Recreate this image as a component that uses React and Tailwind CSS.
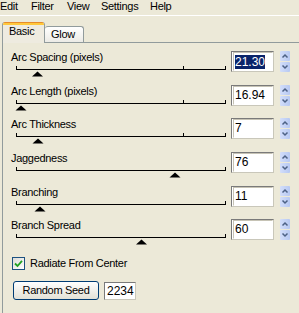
import React from 'react';

const rows = [
  { label: 'Arc Spacing (pixels)', value: '21.30', thumb: 37.5, mid: true, h: 'h-[34px]', selected: true },
  { label: 'Arc Length (pixels)', value: '16.94', thumb: 21, mid: true, h: 'h-[33px]' },
  { label: 'Arc Thickness', value: '7', thumb: 38, mid: true, h: 'h-[34px]' },
  { label: 'Jaggedness', value: '76', thumb: 175, mid: false, h: 'h-[34px]' },
  { label: 'Branching', value: '11', thumb: 40, mid: false, h: 'h-[33px]' },
  { label: 'Branch Spread', value: '60', thumb: 141.5, mid: false, h: 'h-[34px]' },
];

function Spinner() {
  return (
    <svg width="10" height="21" className="block">
      <defs>
        <linearGradient id="sp" x1="0" y1="0" x2="1" y2="0">
          <stop offset="0" stopColor="#D3DEFA" />
          <stop offset="1" stopColor="#B6C8F2" />
        </linearGradient>
      </defs>
      <rect x="0" y="0" width="10" height="10" rx="1" fill="url(#sp)" />
      <rect x="0" y="11" width="10" height="10" rx="1" fill="url(#sp)" />
      <path d="M2.5 6.5 L5 4 L7.5 6.5" fill="none" stroke="#4D6185" strokeWidth="1.5" />
      <path d="M2.5 14.5 L5 17 L7.5 14.5" fill="none" stroke="#4D6185" strokeWidth="1.5" />
    </svg>
  );
}

function Slider({ thumb, mid }) {
  const cx = thumb - 3;
  return (
    <svg width="226" height="13" className="block">
      <line x1="13" y1="5.5" x2="223" y2="5.5" stroke="#000" strokeWidth="1" />
      <line x1="13.5" y1="2" x2="13.5" y2="6" stroke="#000" strokeWidth="1" />
      <line x1="222.5" y1="2" x2="222.5" y2="6" stroke="#000" strokeWidth="1" />
      {mid && <line x1="180.5" y1="2" x2="180.5" y2="6" stroke="#000" strokeWidth="1" />}
      <polygon points={`${cx - 5.5},12.5 ${cx + 5.5},12.5 ${cx},7.5`} fill="#000" />
    </svg>
  );
}

function Row({ r }) {
  return (
    <div className={`flex ${r.h}`}>
      <div className="w-[228px] flex flex-col">
        <div className="pl-[8px] leading-[13px] h-[13px] whitespace-nowrap">{r.label}</div>
        <Slider thumb={r.thumb} mid={r.mid} />
      </div>
      <div className="w-[43px] h-[21px] border border-t-[#7A7A7A] border-l-[#7A7A7A] border-r-[#C9C7BA] border-b-[#C9C7BA] bg-white flex items-center pl-[1px] text-[12px] tracking-normal leading-[15px]">
        <div className="w-full h-full border border-t-[#C6C3B5] border-l-[#C6C3B5] border-r-white border-b-white flex items-center pl-[1px]">
          {r.selected ? (
            <span className="bg-[#0A246A] text-white leading-[14px]">{r.value}</span>
          ) : (
            <span>{r.value}</span>
          )}
        </div>
      </div>
      <div className="ml-[6px]">
        <Spinner />
      </div>
    </div>
  );
}

export default function App() {
  return (
    <div className="w-[299px] h-[313px] overflow-hidden bg-[#ECE9D8] text-black text-[11px] tracking-[-0.3px] font-['Liberation_Sans',Arial,sans-serif]">
      {/* menu */}
      <div className="h-[16px] border-b border-b-white flex leading-[13px] whitespace-nowrap">
        <span className="w-[31px]">Edit</span>
        <span className="w-[36px]">Filter</span>
        <span className="w-[34px]">View</span>
        <span className="w-[49px]">Settings</span>
        <span>Help</span>
      </div>
      {/* tabs */}
      <div className="h-[26px] pl-[2px] flex items-end">
        <div className="relative z-10 -mb-[1px] w-[43px] h-[21px] rounded-t-[3px] border-l border-r border-[#919B9C] bg-[#EEEBE0] overflow-hidden">
          <div className="h-[1px] bg-[#E68B2C]" />
          <div className="h-[2px] bg-[#FFC83C]" />
          <div className="pl-[6px] pt-[0px] leading-[13px]">Basic</div>
        </div>
        <div className="w-[39px] h-[16px] rounded-t-[3px] border-t border-r border-[#919B9C] bg-gradient-to-b from-white to-[#ECEBE6] pl-[6px] pt-[1px] leading-[13px]">
          Glow
        </div>
      </div>
      {/* panel */}
      <div className="ml-[2px] h-[300px] border-t border-l border-[#919B9C] pt-[8px]">
        {rows.map((r) => (
          <Row key={r.label} r={r} />
        ))}
        <div className="mt-[4px] pl-[9px] flex items-center h-[13px]">
          <div className="w-[13px] h-[13px] border border-[#1C5180] bg-gradient-to-br from-[#DCDCD7] to-white flex items-center justify-center">
            <svg width="9" height="9" className="block">
              <path d="M1 4.5 L3.5 7 L8 1.8" fill="none" stroke="#21A121" strokeWidth="1.8" />
            </svg>
          </div>
          <span className="ml-[5px] leading-[13px] whitespace-nowrap">Radiate From Center</span>
        </div>
        <div className="mt-[11px] pl-[10px] flex items-start">
          <div className="w-[86px] h-[19px] rounded-[3px] border border-[#003C74] bg-gradient-to-b from-white to-[#E3E1D6] flex items-center justify-center leading-[13px] whitespace-nowrap">
            Random Seed
          </div>
          <div className="ml-[5px] mt-[1px] w-[32px] h-[18px] border border-t-[#7A7A7A] border-l-[#7A7A7A] border-r-[#C9C7BA] border-b-[#C9C7BA] bg-white flex items-center pl-[2px] text-[12px] tracking-normal leading-[14px]">
            2234
          </div>
        </div>
      </div>
    </div>
  );
}
